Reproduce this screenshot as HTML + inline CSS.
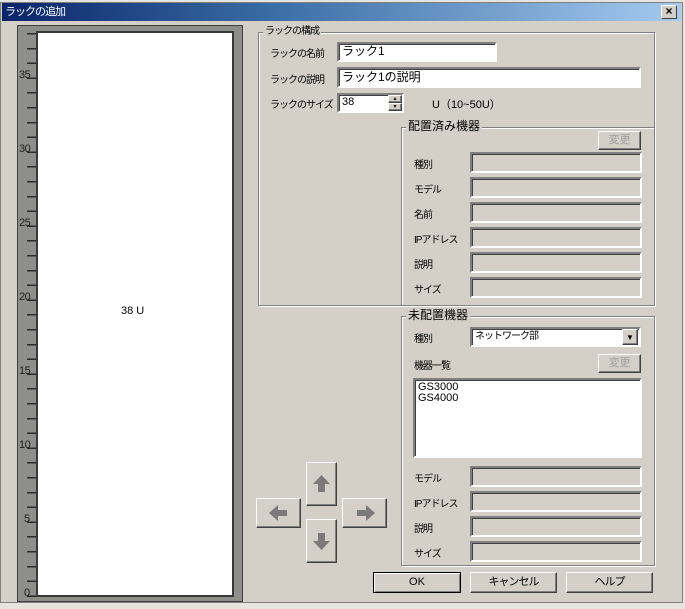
<!DOCTYPE html>
<html><head><meta charset="utf-8"><style>
*{box-sizing:border-box;margin:0;padding:0}
body{width:685px;height:609px;background:#e6e4df;font-family:"Liberation Sans","Noto Sans CJK JP",sans-serif;font-size:11px;color:#000;position:relative;overflow:hidden}
.a{position:absolute}
.win{left:0;top:2px;width:683px;height:601px;background:#d4d0c8;border:1px solid #808080}
.title{left:2px;top:3px;width:679px;height:18px;background:linear-gradient(90deg,#0a246a,#3a6ea5 40%,#a6caf0);color:#fff;font-size:11px;line-height:18px;padding-left:3px;letter-spacing:-1px}
.x{left:661px;top:5px;width:16px;height:14px;background:#d4d0c8;border:1px solid;border-color:#fff #404040 #404040 #fff;font-size:12px;line-height:11px;text-align:center;font-weight:bold;color:#000}
.grp{border:1px solid #808080;box-shadow:1px 1px 0 #fff inset,1px 1px 0 #fff}
.lg{background:#d4d0c8;padding:0 2px;font-size:11px;line-height:12px}
.in{background:#fff;border:2px solid;border-color:#808080 #fff #fff #808080;box-shadow:inset 1px 1px 0 #404040;padding-left:3px;font-size:12px}
.ro{background:#d4d0c8;border:2px solid;border-color:#808080 #fff #fff #808080;box-shadow:inset 1px 1px 0 #404040}
.btn{background:#d4d0c8;border:1px solid;border-color:#fff #404040 #404040 #fff;box-shadow:inset -1px -1px 0 #808080;text-align:center;font-size:11px}
.lb{font-size:10px;letter-spacing:-1px}
.tick{font-size:11px;color:#222;left:19px;letter-spacing:-0.5px}
</style></head><body>
<div class="a win"></div>
<div class="a title">ラックの追加</div>
<div class="a x">×</div>

<!-- rack -->
<div class="a" style="left:17px;top:25px;width:226px;height:577px;background:#8e8e8a;border:1px solid #404040"></div>
<div class="a" style="left:36px;top:31px;width:198px;height:566px;background:#fff;border:2px solid #3a3a3a"></div>
<div class="a" style="left:27px;top:33px;width:9px;height:564px;background:repeating-linear-gradient(180deg,#2a2a2a 0,#2a2a2a 1.5px,transparent 1.5px,transparent 14.8px)"></div>
<div class="a tick" style="top:69px">35</div>
<div class="a tick" style="top:143px">30</div>
<div class="a tick" style="top:217px">25</div>
<div class="a tick" style="top:291px">20</div>
<div class="a tick" style="top:365px">15</div>
<div class="a tick" style="top:439px">10</div>
<div class="a tick" style="top:513px;left:24px">5</div>
<div class="a tick" style="top:587px;left:24px">0</div>
<div class="a" style="left:121px;top:305px;font-size:11px">38 U</div>

<!-- group 1 -->
<div class="a grp" style="left:258px;top:32px;width:397px;height:274px"></div>
<div class="a lg lb" style="left:263px;top:26px">ラックの構成</div>
<div class="a lb" style="left:270px;top:45px">ラックの名前</div>
<div class="a in" style="left:337px;top:42px;width:160px;height:20px;line-height:15px">ラック1</div>
<div class="a lb" style="left:270px;top:71px">ラックの説明</div>
<div class="a in" style="left:337px;top:67px;width:304px;height:21px;line-height:16px">ラック1の説明</div>
<div class="a lb" style="left:270px;top:96px">ラックのサイズ</div>
<div class="a in" style="left:337px;top:93px;width:67px;height:20px;font-size:11px;line-height:15px">38</div>
<div class="a btn" style="left:388px;top:95px;width:14px;height:8px;font-size:6px;line-height:6px">▴</div>
<div class="a btn" style="left:388px;top:103px;width:14px;height:8px;font-size:6px;line-height:6px">▾</div>
<div class="a" style="left:432px;top:96px;font-size:11px">U（10~50U）</div>

<div class="a grp" style="left:401px;top:127px;width:254px;height:179px"></div>
<div class="a lg" style="left:406px;top:120px;font-size:12px">配置済み機器</div>
<div class="a btn" style="left:598px;top:131px;width:43px;height:19px;color:#a0a0a0;line-height:17px">変更</div>
<div class="a lb" style="left:414px;top:156px">種別</div><div class="a ro" style="left:470px;top:152px;width:172px;height:21px"></div>
<div class="a lb" style="left:414px;top:181px">モデル</div><div class="a ro" style="left:470px;top:177px;width:172px;height:21px"></div>
<div class="a lb" style="left:414px;top:206px">名前</div><div class="a ro" style="left:470px;top:202px;width:172px;height:21px"></div>
<div class="a lb" style="left:414px;top:231px">IPアドレス</div><div class="a ro" style="left:470px;top:227px;width:172px;height:21px"></div>
<div class="a lb" style="left:414px;top:256px">説明</div><div class="a ro" style="left:470px;top:252px;width:172px;height:21px"></div>
<div class="a lb" style="left:414px;top:281px">サイズ</div><div class="a ro" style="left:470px;top:277px;width:172px;height:21px"></div>

<!-- group 未配置 -->
<div class="a grp" style="left:401px;top:316px;width:254px;height:250px"></div>
<div class="a lg" style="left:406px;top:309px;font-size:12px">未配置機器</div>
<div class="a lb" style="left:414px;top:330px">種別</div>
<div class="a in" style="left:470px;top:327px;width:171px;height:20px;font-size:10px;line-height:15px;letter-spacing:-1px">ネットワーク部</div>
<div class="a btn" style="left:622px;top:329px;width:16px;height:16px;font-size:8px;line-height:15px">▼</div>
<div class="a lb" style="left:414px;top:357px">機器一覧</div>
<div class="a btn" style="left:598px;top:354px;width:43px;height:19px;color:#a0a0a0;line-height:17px">変更</div>
<div class="a in" style="left:413px;top:378px;width:229px;height:80px;font-size:11px;line-height:11px;padding-top:2px">GS3000<br>GS4000</div>
<div class="a lb" style="left:414px;top:470px">モデル</div><div class="a ro" style="left:470px;top:466px;width:172px;height:21px"></div>
<div class="a lb" style="left:414px;top:495px">IPアドレス</div><div class="a ro" style="left:470px;top:491px;width:172px;height:21px"></div>
<div class="a lb" style="left:414px;top:520px">説明</div><div class="a ro" style="left:470px;top:516px;width:172px;height:21px"></div>
<div class="a lb" style="left:414px;top:545px">サイズ</div><div class="a ro" style="left:470px;top:541px;width:172px;height:21px"></div>

<!-- arrows -->
<div class="a btn" style="left:306px;top:462px;width:31px;height:44px"><svg width="29" height="42"><path d="M14.5 12 L23 21 L18 21 L18 29 L11 29 L11 21 L6 21Z" fill="#7a7a7a"/></svg></div>
<div class="a btn" style="left:306px;top:519px;width:31px;height:44px"><svg width="29" height="42"><path d="M14.5 30 L23 21 L18 21 L18 13 L11 13 L11 21 L6 21Z" fill="#7a7a7a"/></svg></div>
<div class="a btn" style="left:256px;top:498px;width:45px;height:30px"><svg width="43" height="28"><path d="M12 14 L21 6 L21 11 L30 11 L30 17 L21 17 L21 22Z" fill="#7a7a7a"/></svg></div>
<div class="a btn" style="left:342px;top:498px;width:45px;height:30px"><svg width="43" height="28"><path d="M32 14 L23 6 L23 11 L14 11 L14 17 L23 17 L23 22Z" fill="#7a7a7a"/></svg></div>

<!-- bottom buttons -->
<div class="a btn" style="left:373px;top:572px;width:88px;height:21px;line-height:18px;border:1px solid #000;box-shadow:inset 1px 1px 0 #fff,inset -1px -1px 0 #808080">OK</div>
<div class="a btn" style="left:470px;top:572px;width:87px;height:21px;line-height:18px;letter-spacing:-1px">キャンセル</div>
<div class="a btn" style="left:566px;top:572px;width:87px;height:21px;line-height:18px;letter-spacing:-1px">ヘルプ</div>
</body></html>
